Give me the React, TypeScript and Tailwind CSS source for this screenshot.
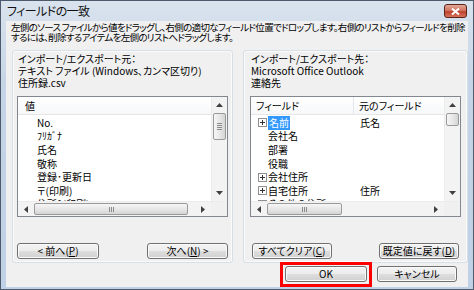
import React from "react";

type Row = { text: string; plus?: boolean; selected?: boolean; source?: string };

const leftRows = ["No.", "ﾌﾘｶﾞﾅ", "氏名", "敬称", "登録･更新日", "〒(印刷)", "住所1(印刷)"];

const rightRows: Row[] = [
  { text: "名前", plus: true, selected: true, source: "氏名" },
  { text: "会社名" },
  { text: "部署" },
  { text: "役職" },
  { text: "会社住所", plus: true },
  { text: "自宅住所", plus: true, source: "住所" },
  { text: "その他の住所", plus: true },
];

const Arrow = ({ dir }: { dir: "up" | "down" | "left" | "right" }) => {
  const pts = {
    up: "0,4 3.5,0 7,4",
    down: "0,0 3.5,4 7,0",
    left: "4,0 0,3.5 4,7",
    right: "0,0 4,3.5 0,7",
  }[dir];
  const vertical = dir === "up" || dir === "down";
  return (
    <svg width={vertical ? 7 : 4} height={vertical ? 4 : 7} className="fill-[#404040]">
      <polygon points={pts} />
    </svg>
  );
};

const VScroll = ({ thumb }: { thumb: number }) => (
  <div className="w-[16px] flex flex-col bg-[#f3f3f3] border-l border-[#ececec]">
    <div className="h-[16px] flex items-center justify-center">
      <Arrow dir="up" />
    </div>
    <div className="flex-1">
      <div
        className="mx-[1px] rounded-[2px] border border-[#9a9a9a] bg-[linear-gradient(90deg,#f6f6f6,#e4e4e4_60%,#d4d4d4)] flex flex-col items-center justify-center gap-[1px]"
        style={{ height: thumb }}
      >
        {thumb > 20 && (
          <>
            <div className="w-[5px] h-[1px] bg-[#8a8a8a]" />
            <div className="w-[5px] h-[1px] bg-[#8a8a8a]" />
            <div className="w-[5px] h-[1px] bg-[#8a8a8a]" />
            <div className="w-[5px] h-[1px] bg-[#8a8a8a]" />
          </>
        )}
      </div>
    </div>
    <div className="h-[16px] flex items-center justify-center">
      <Arrow dir="down" />
    </div>
  </div>
);

const HScroll = ({ thumb }: { thumb: number }) => (
  <div className="h-[15px] flex bg-[#f3f3f3] border-t border-[#ececec]">
    <div className="w-[16px] flex items-center justify-center">
      <Arrow dir="left" />
    </div>
    <div className="flex-1 flex items-stretch">
      <div
        className="my-[1px] rounded-[2px] border border-[#9a9a9a] bg-[linear-gradient(#f6f6f6,#e4e4e4_60%,#d4d4d4)] flex items-center justify-center gap-[1px]"
        style={{ width: thumb }}
      >
        <div className="w-[1px] h-[5px] bg-[#8a8a8a]" />
        <div className="w-[1px] h-[5px] bg-[#8a8a8a]" />
        <div className="w-[1px] h-[5px] bg-[#8a8a8a]" />
      </div>
    </div>
    <div className="w-[16px] flex items-center justify-center">
      <Arrow dir="right" />
    </div>
    <div className="w-[16px] bg-[#f0f0f0]" />
  </div>
);

const PlusBox = () => (
  <div className="w-[9px] h-[9px] border border-[#8f8f8f] bg-white flex items-center justify-center relative">
    <div className="w-[5px] h-[1px] bg-[#303030]" />
    <div className="absolute w-[1px] h-[5px] bg-[#303030]" />
  </div>
);

const Btn = ({ children, className = "" }: { children: React.ReactNode; className?: string }) => (
  <div
    className={
      "h-[16px] rounded-[3px] border border-[#707070] bg-[linear-gradient(#f4f4f4_0%,#ececec_48%,#dedede_52%,#d0d0d0_100%)] shadow-[inset_0_0_0_1px_#fafafa] flex items-center justify-center text-[10px] leading-none text-black " +
      className
    }
  >
    {children}
  </div>
);

const GroupBox = ({
  lines,
  list,
  buttons,
  className,
}: {
  lines: string[];
  list: React.ReactNode;
  buttons: React.ReactNode;
  className: string;
}) => (
  <div
    className={
      "h-[213px] rounded-[3px] border border-[#d5dfe5] shadow-[inset_0_0_0_1px_#fbfbfb] flex flex-col " + className
    }
  >
    <div className="pt-[2px] pl-[1px] text-[10px] leading-[12px]">
      {lines.map((l) => (
        <div key={l} className="whitespace-nowrap">
          {l}
        </div>
      ))}
    </div>
    <div className="mt-[7px] h-[121px] border border-[#828790] bg-white flex flex-col">{list}</div>
    <div className="mt-[26px] flex justify-between">{buttons}</div>
  </div>
);

export default function App() {
  return (
    <div className="w-[474px] h-[290px] flex flex-col border border-[#4c5a6c] bg-[linear-gradient(#d9e3ee,#c5d4e6_30%,#bfd1e6)] font-['Noto_Sans_CJK_JP',sans-serif] [font-feature-settings:'palt'] text-black overflow-hidden">
      {/* title bar */}
      <div className="h-[20px] flex items-center justify-between pl-[6px] pr-[6px]">
        <span className="text-[12px] leading-none tracking-[-0.6px] text-[#111]">フィールドの一致</span>
        <div className="w-[23px] h-[14px] rounded-[3px] border border-[#5a2418] bg-[linear-gradient(#e4a898,#cf6f5c_50%,#c0402c_55%,#d4735c)] flex items-center justify-center">
          <svg width="9" height="7" viewBox="0 0 9 7">
            <path d="M1 0.5 L8 6.5 M8 0.5 L1 6.5" stroke="#fff" strokeWidth="2" />
          </svg>
        </div>
      </div>

      {/* client area */}
      <div className="mx-[5px] mb-[2px] flex-1 bg-[#f0f0f0] flex flex-col">
        <div className="pl-[5px] pt-[1px] text-[9.5px] leading-[10px] tracking-[-0.68px] whitespace-nowrap">
          <div>左側のソース ファイルから値をドラッグし、右側の適切なフィールド位置でドロップします。右側のリストからフィールドを削除</div>
          <div>するには、削除するアイテムを左側のリストへドラッグします。</div>
        </div>

        <div className="mt-[8px] pl-[6px] flex gap-[10px]">
          <GroupBox
            className="w-[221px] px-[4px]"
            lines={["インポート/エクスポート元：", "テキスト ファイル (Windows、カンマ区切り)", "住所録.csv"]}
            list={
              <>
                <div className="flex-1 flex min-h-0">
                  <div className="flex-1 flex flex-col overflow-hidden">
                    <div className="h-[18px] shrink-0 flex items-center pl-[7px] text-[10px] border-b border-[#e6e6e6] bg-[linear-gradient(#ffffff,#f7f8f9)]">
                      値
                    </div>
                    <div className="pt-[1px]">
                      {leftRows.map((r) => (
                        <div key={r} className="h-[13.6px] flex items-center pl-[19px] text-[10px] leading-none whitespace-nowrap">
                          {r}
                        </div>
                      ))}
                    </div>
                  </div>
                  <VScroll thumb={27} />
                </div>
                <HScroll thumb={154} />
              </>
            }
            buttons={
              <>
                <Btn className="w-[82px]">
                  <span>
                    &lt; 前へ(<span className="underline">P</span>)
                  </span>
                </Btn>
                <Btn className="w-[81px]">
                  <span>
                    次へ(<span className="underline">N</span>) &gt;
                  </span>
                </Btn>
              </>
            }
          />
          <GroupBox
            className="w-[225px] px-[6px]"
            lines={["インポート/エクスポート先：", "Microsoft Office Outlook", "連絡先"]}
            list={
              <>
                <div className="flex-1 flex min-h-0">
                  <div className="flex-1 flex flex-col overflow-hidden">
                    <div className="h-[18px] shrink-0 flex text-[10px] border-b border-[#e6e6e6] bg-[linear-gradient(#ffffff,#f7f8f9)]">
                      <div className="w-[103px] flex items-center pl-[5px] border-r border-[#e3e8ee]">フィールド</div>
                      <div className="flex-1 flex items-center pl-[5px] whitespace-nowrap">元のフィールド</div>
                    </div>
                    <div className="pt-[1px]">
                      {rightRows.map((r) => (
                        <div key={r.text} className="h-[13.6px] flex items-center text-[10px] leading-none whitespace-nowrap">
                          <div className="w-[103px] flex items-center pl-[7px]">
                            <div className="w-[10px] flex items-center">{r.plus && <PlusBox />}</div>
                            <span className={r.selected ? "bg-[#3399ff] text-white px-[1px] py-[2px]" : ""}>
                              {r.text}
                            </span>
                          </div>
                          <div className="pl-[6px]">{r.source ?? ""}</div>
                        </div>
                      ))}
                    </div>
                  </div>
                  <VScroll thumb={13} />
                </div>
                <HScroll thumb={75} />
              </>
            }
            buttons={
              <div className="w-full flex justify-between px-[2px]">
                <Btn className="w-[80px]">
                  <span>
                    すべてクリア(<span className="underline">C</span>)
                  </span>
                </Btn>
                <Btn className="w-[80px]">
                  <span>
                    既定値に戻す(<span className="underline">D</span>)
                  </span>
                </Btn>
              </div>
            }
          />
        </div>

        <div className="mt-[3px] flex justify-end gap-[10px] pr-[11px]">
          <div className="relative">
            <Btn className="w-[82px]">OK</Btn>
            <div className="absolute -left-[5px] -right-[5px] -top-[4px] -bottom-[5px] border-[3px] border-[#ff0000]" />
          </div>
          <Btn className="w-[80px]">キャンセル</Btn>
        </div>
      </div>
    </div>
  );
}
